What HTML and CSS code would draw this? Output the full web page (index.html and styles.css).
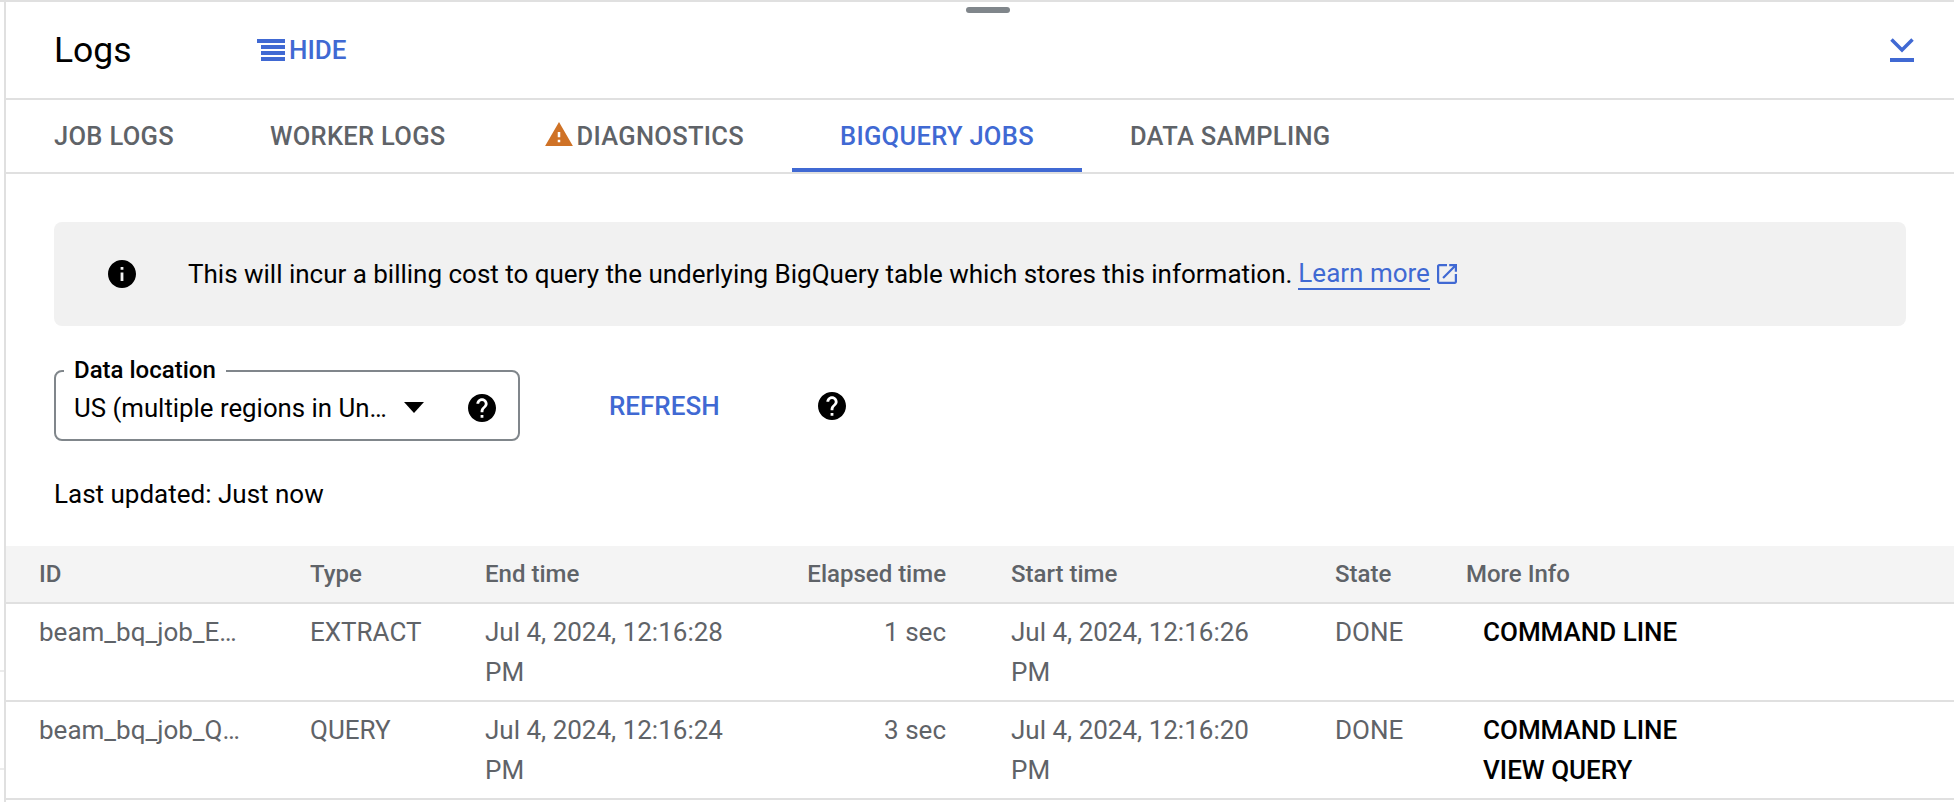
FILE: index.html
```html
<!DOCTYPE html>
<html lang="en">
<head>
  <meta charset="UTF-8" />
  <meta name="viewport" content="width=device-width, initial-scale=1" />
  <title>Logs</title>
  <link rel="stylesheet" href="styles.css">
</head>
<body>
  <div class="page-tick tick-one"></div>
  <div class="page-tick tick-two"></div>
  <div class="panel">
    <div class="drag-handle"></div>

    <header class="panel-header">
      <h2 class="panel-title">Logs</h2>
      <button class="hide-btn" type="button">
        <svg class="hide-icon" viewBox="0 0 28 22" aria-hidden="true">
          <rect x="0" y="0" width="28" height="4" />
          <rect x="4" y="6" width="24" height="4" />
          <rect x="4" y="12" width="24" height="4" />
          <rect x="4" y="18" width="24" height="4" />
        </svg>
        HIDE
      </button>
      <button class="collapse-btn" type="button" aria-label="Collapse">
        <svg class="collapse-icon" viewBox="0 0 24 24" aria-hidden="true">
          <path d="M1.5 1.5 12 12 22.5 1.5" />
          <rect class="collapse-bar" x="0" y="20" width="24" height="4" />
        </svg>
      </button>
    </header>

    <nav class="tabs">
      <a class="tab">JOB LOGS</a>
      <a class="tab">WORKER LOGS</a>
      <a class="tab">
        <svg class="warn-icon" viewBox="1 2 22 19" aria-hidden="true">
          <path d="M1 21h22L12 2 1 21zm12-3h-2v-2h2v2zm0-4h-2v-4h2v4z" />
        </svg>
        DIAGNOSTICS
      </a>
      <a class="tab active">BIGQUERY JOBS</a>
      <a class="tab">DATA SAMPLING</a>
    </nav>

    <section class="notice">
      <svg class="round-icon notice-icon" viewBox="2 2 20 20" aria-hidden="true">
        <path d="M12 2C6.48 2 2 6.48 2 12s4.48 10 10 10 10-4.48 10-10S17.52 2 12 2zm1 15h-2v-6h2v6zm0-8h-2V7h2v2z" />
      </svg>
      <p class="notice-text">This will incur a billing cost to query the underlying BigQuery table which stores this information.</p>
      <a class="learn-link">Learn more</a>
      <svg class="ext-icon" viewBox="3 3 18 18" aria-hidden="true">
        <path d="M19 19H5V5h7V3H5c-1.11 0-2 .9-2 2v14c0 1.1.89 2 2 2h14c1.1 0 2-.9 2-2v-7h-2v7zM14 3v2h3.59l-9.83 9.83 1.41 1.41L19 6.41V10h2V3h-7z" />
      </svg>
    </section>

    <section class="controls">
      <div class="location-select">
        <span class="select-label">Data location</span>
        <span class="select-value">US (multiple regions in Un…</span>
        <span class="select-arrow"></span>
        <svg class="round-icon" viewBox="2 2 20 20" aria-hidden="true">
          <path d="M12 2C6.48 2 2 6.48 2 12s4.48 10 10 10 10-4.48 10-10S17.52 2 12 2zm1 17h-2v-2h2v2zm2.07-7.75l-.9.92C13.45 12.9 13 13.5 13 15h-2v-.5c0-1.1.45-2.1 1.17-2.83l1.24-1.26c.37-.36.59-.86.59-1.41 0-1.1-.9-2-2-2s-2 .9-2 2H8c0-2.21 1.79-4 4-4s4 1.79 4 4c0 .88-.36 1.68-.93 2.25z" />
        </svg>
      </div>
      <button class="refresh-btn" type="button">REFRESH</button>
      <svg class="round-icon" viewBox="2 2 20 20" aria-hidden="true">
        <path d="M12 2C6.48 2 2 6.48 2 12s4.48 10 10 10 10-4.48 10-10S17.52 2 12 2zm1 17h-2v-2h2v2zm2.07-7.75l-.9.92C13.45 12.9 13 13.5 13 15h-2v-.5c0-1.1.45-2.1 1.17-2.83l1.24-1.26c.37-.36.59-.86.59-1.41 0-1.1-.9-2-2-2s-2 .9-2 2H8c0-2.21 1.79-4 4-4s4 1.79 4 4c0 .88-.36 1.68-.93 2.25z" />
      </svg>
    </section>

    <p class="last-updated">Last updated: Just now</p>

    <table class="jobs">
      <colgroup>
        <col class="col-id" />
        <col class="col-type" />
        <col class="col-end" />
        <col class="col-elapsed" />
        <col class="col-start" />
        <col class="col-state" />
        <col />
      </colgroup>
      <thead>
        <tr>
          <th>ID</th>
          <th>Type</th>
          <th>End time</th>
          <th class="num">Elapsed time</th>
          <th>Start time</th>
          <th>State</th>
          <th>More Info</th>
        </tr>
      </thead>
      <tbody>
        <tr>
          <td>beam_bq_job_E…</td>
          <td>EXTRACT</td>
          <td>Jul 4, 2024, 12:16:28 PM</td>
          <td class="num">1 sec</td>
          <td>Jul 4, 2024, 12:16:26 PM</td>
          <td>DONE</td>
          <td class="more"><a>COMMAND LINE</a></td>
        </tr>
        <tr>
          <td>beam_bq_job_Q…</td>
          <td>QUERY</td>
          <td>Jul 4, 2024, 12:16:24 PM</td>
          <td class="num">3 sec</td>
          <td>Jul 4, 2024, 12:16:20 PM</td>
          <td>DONE</td>
          <td class="more"><a>COMMAND LINE</a><a>VIEW QUERY</a></td>
        </tr>
      </tbody>
    </table>
  </div>
</body>
</html>
```

FILE: styles.css
```css
:root {
  --blue: #4069d3;
  --line: #e0e0e0;
  --grey-text: #5f6368;
}
html, body { height: 100%; }
body {
  margin: 0; font-family: Roboto, sans-serif;
  font-size: 26px; color: #000; background: #fff;
  border-top: 2px solid var(--line);
  box-sizing: border-box; overflow: hidden;
}
button {
  font: inherit; background: none; border: none; padding: 0; cursor: pointer;
}
.page-tick {
  position: absolute; left: 0; width: 4px; height: 2px; background: #ececec;
}
.tick-one { top: 670px; }
.tick-two { top: 768px; }

.panel {
  position: relative; margin-left: 4px;
  border-left: 2px solid var(--line); height: 100%;
}
.drag-handle {
  position: absolute; top: 5px; left: 960px;
  width: 44px; height: 6px; border-radius: 3px; background: #80868b;
}

/* header */
.panel-header {
  display: flex; align-items: center; height: 96px;
  padding: 0 40px 0 48px; border-bottom: 2px solid var(--line);
}
.panel-title {
  margin: 0; width: 203px; font-size: 35.5px; font-weight: 400;
}
.hide-btn {
  display: flex; align-items: center; gap: 4px;
  color: var(--blue); font-weight: 500;
}
.hide-icon { width: 28px; height: 22px; fill: var(--blue); }
.collapse-btn { margin-left: auto; display: flex; }
.collapse-icon {
  width: 24px; height: 24px; fill: none; stroke: var(--blue); stroke-width: 3.5;
}
.collapse-bar { fill: var(--blue); stroke: none; }

/* tabs */
.tabs {
  display: flex; height: 72px; border-bottom: 2px solid var(--line);
}
.tab {
  display: flex; align-items: center; gap: 4px; padding: 0 48px;
  color: var(--grey-text); font-size: 25.5px; font-weight: 500;
  letter-spacing: .3px; box-sizing: border-box;
}
.tab.active {
  color: var(--blue); border-bottom: 4px solid var(--blue); padding-top: 4px;
}
.warn-icon { width: 28px; height: 24px; fill: #cf7226; margin: -4px 0 0 3px; }

/* notice */
.notice {
  display: flex; align-items: center; height: 104px; margin: 48px 48px 0;
  padding-left: 54px; background: #f1f1f1; border-radius: 8px;
}
.round-icon { width: 28px; height: 28px; fill: #000; flex: none; }
.notice-icon { margin-right: 52px; }
.notice-text { margin: 0 6px 0 0; letter-spacing: -.01px; }
.learn-link {
  color: var(--blue); border-bottom: 2px solid var(--blue); line-height: 30px;
}
.ext-icon { width: 20px; height: 20px; margin-left: 7px; fill: var(--blue); }

/* location + refresh */
.controls {
  display: flex; align-items: center; margin: 44px 48px 0;
}
.location-select {
  position: relative; display: flex; align-items: center; box-sizing: border-box;
  width: 466px; height: 71px; padding: 4px 22px 0 18px;
  border: 2px solid #80868b; border-radius: 8px;
}
.select-label {
  position: absolute; top: -14px; left: 8px; padding: 0 10px;
  background: #fff; font-size: 24px; font-weight: 500; line-height: 24px;
}
.select-value { width: 330px; font-size: 25.8px; white-space: nowrap; }
.select-arrow {
  width: 0; height: 0; margin-right: 44px;
  border-left: 10px solid transparent; border-right: 10px solid transparent;
  border-top: 11px solid #000;
}
.refresh-btn {
  margin: 0 98px 0 89px; color: var(--blue); font-weight: 500;
}

.last-updated { margin: 33px 48px 0; line-height: 40px; }

/* jobs table */
.jobs {
  width: 100%; margin-top: 32px; table-layout: fixed;
  border-collapse: collapse; color: var(--grey-text);
}
.col-id { width: 304px; }
.col-type { width: 175px; }
.col-end { width: 265px; }
.col-elapsed { width: 261px; }
.col-start { width: 324px; }
.col-state { width: 131px; }
.jobs th {
  height: 56px; padding: 0; text-align: left; font-size: 24px; font-weight: 500;
  background: #f4f4f4; border-bottom: 2px solid var(--line);
}
.jobs td {
  padding: 8px 0; line-height: 40px; vertical-align: top;
  border-bottom: 2px solid var(--line);
}
.jobs th:first-child, .jobs td:first-child { padding-left: 33px; }
.jobs td:nth-child(5) { padding-right: 50px; }
.jobs .num { text-align: right; padding-right: 65px; }
.more a {
  display: block; padding-left: 17px; color: #000; font-weight: 500;
}
```
